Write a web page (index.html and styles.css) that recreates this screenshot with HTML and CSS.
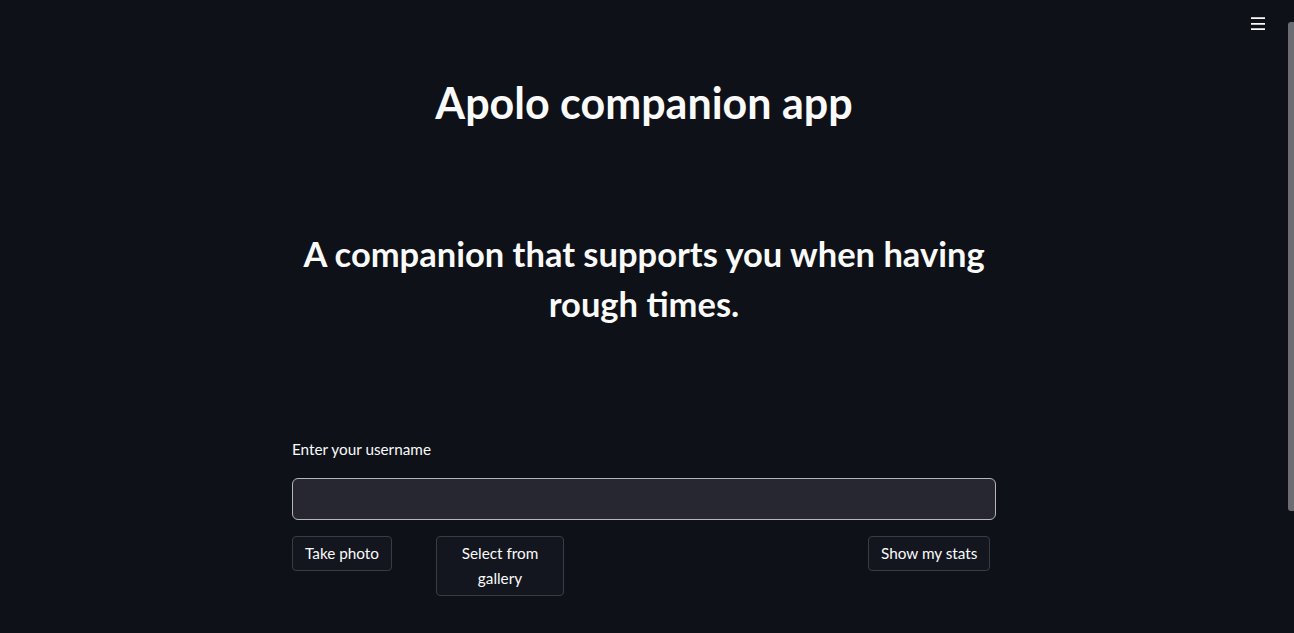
FILE: index.html
```html
<!DOCTYPE html>
<html lang="en">
<head>
<meta charset="utf-8">
<title>Apolo companion app</title>
<link rel="stylesheet" href="styles.css">
</head>
<body>
<div class="app">
  <div class="view">
    <main class="main">
      <h1 class="title">Apolo companion app</h1>
      <h2 class="subtitle">A companion that supports you when having rough times.</h2>
      <div class="field">
        <label class="label" for="username">Enter your username</label>
        <input class="input" id="username" type="text">
      </div>
      <div class="cols">
        <div class="col"><button class="btn">Take photo</button></div>
        <div class="col"><button class="btn btn-fill">Select from gallery</button></div>
        <div class="col"></div>
        <div class="col"></div>
        <div class="col"><button class="btn">Show my stats</button></div>
      </div>
    </main>
  </div>
  <div class="track"><div class="thumb"></div></div>
  <header class="topbar">
    <button class="menu" aria-label="Main menu">
      <svg width="16" height="16" viewBox="0 0 16 16"><path d="M1 2.2h14M1 7.8h14M1 13.2h14" stroke="#fafafa" stroke-width="1.7" fill="none"/></svg>
    </button>
  </header>
</div>
</body>
</html>
```
FILE: styles.css
```css
html, body {
  margin: 0;
  padding: 0;
  height: 100%;
  overflow: hidden;
  background: #0e1117;
}
body {
  font-family: "Lato", "Noto Sans", sans-serif;
  color: #fafafa;
}
.app {
  position: relative;
  display: flex;
  height: 633px;
}
.view {
  flex: 1;
}
.track {
  width: 6px;
  padding-top: 22px;
}
.thumb {
  height: 489px;
  background: #6c6d72;
  border-radius: 3px 0 0 3px;
}
.topbar {
  position: absolute;
  top: 16px;
  right: 28px;
}
.menu {
  background: none;
  border: 0;
  padding: 0;
  width: 16px;
  height: 16px;
  cursor: pointer;
}
.menu svg { display: block; }
.main {
  width: 704px;
  margin: 0 auto;
  padding-top: 76px;
}
.title {
  margin: 0;
  font-size: 43px;
  line-height: 53px;
  font-weight: 700;
  text-align: center;
}
.subtitle {
  margin: 100px 0 0;
  font-size: 34.5px;
  line-height: 50px;
  font-weight: 700;
  text-align: center;
}
.field {
  margin-top: 109px;
  display: flex;
  flex-direction: column;
}
.label {
  font-size: 15.3px;
  line-height: 22px;
  margin-bottom: 18px;
}
.input {
  height: 42px;
  box-sizing: border-box;
  background: #262730;
  border: 1px solid #b5b6ba;
  border-radius: 6px;
  color: #fafafa;
  font: inherit;
  font-size: 16px;
  padding: 0 12px;
  outline: none;
}
.cols {
  display: grid;
  grid-template-columns: repeat(5, 1fr);
  gap: 16px;
  margin-top: 16px;
  align-items: start;
}
.btn {
  background: #13161e;
  color: #fafafa;
  border: 1px solid #3a3c44;
  border-radius: 4px;
  font: inherit;
  font-size: 15.3px;
  line-height: 25px;
  padding: 4px 12px;
  max-width: 100%;
  cursor: pointer;
}
.btn-fill { width: 100%; }
```
